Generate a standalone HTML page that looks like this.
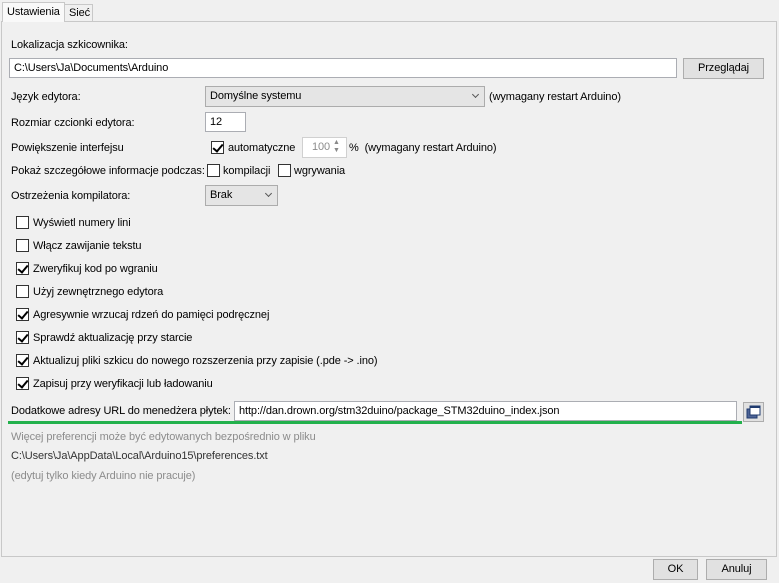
<!DOCTYPE html><html><head><style>
body{margin:0;width:779px;height:583px;background:#f0f0f0;font-family:"Liberation Sans",sans-serif;font-size:11px;letter-spacing:-0.1px;color:#000;position:relative;overflow:hidden}
.a{position:absolute;white-space:nowrap}
.t{position:absolute;white-space:nowrap;line-height:14px;margin-top:1px}
.in{position:absolute;background:#fff;border:1px solid #abadb3;box-sizing:border-box;padding:0 4px;line-height:18px}
.btn{position:absolute;background:#e1e1e1;border:1px solid #adadad;box-sizing:border-box;text-align:center;line-height:19px}
.sel{position:absolute;background:#e5e5e5;border:1px solid #acacac;box-sizing:border-box;padding:0 4px;line-height:19px}
.cb{position:absolute;width:13px;height:13px;border:1px solid #333;background:#fff;box-sizing:border-box}
.cb.c::after{content:"";position:absolute;left:3px;top:0px;width:4px;height:8px;border:solid #000;border-width:0 2px 2px 0;transform:rotate(40deg)}
.chev{position:absolute;right:6px;top:5px;width:4px;height:4px;border:solid #555;border-width:0 1px 1px 0;transform:rotate(45deg)}
.g{color:#8c8c8c}
</style></head><body>
<div class="a" style="left:1px;top:21px;width:774px;height:534px;border:1px solid #c8c8c8;background:#f0f0f0"></div>
<div class="a" style="left:2px;top:2px;width:63px;height:20px;border:1px solid #c8c8c8;border-bottom:none;background:#f9f9f9;line-height:19px;padding-left:4px;box-sizing:border-box">Ustawienia</div>
<div class="a" style="left:65px;top:4px;width:28px;height:17px;border:1px solid #c8c8c8;border-bottom:none;border-left:none;background:#f0f0f0;line-height:17px;padding-left:4px;box-sizing:border-box">Sieć</div>

<div class="t" style="left:11px;top:37px">Lokalizacja szkicownika:</div>
<div class="in" style="left:9px;top:58px;width:668px;height:20px">C:\Users\Ja\Documents\Arduino</div>
<div class="btn" style="left:683px;top:58px;width:81px;height:21px">Przeglądaj</div>

<div class="t" style="left:11px;top:89px">Język edytora:</div>
<div class="sel" style="left:205px;top:86px;width:280px;height:21px">Domyślne systemu<span class="chev"></span></div>
<div class="t" style="left:489px;top:89px">(wymagany restart Arduino)</div>

<div class="t" style="left:11px;top:115px">Rozmiar czcionki edytora:</div>
<div class="in" style="left:205px;top:112px;width:41px;height:20px">12</div>

<div class="t" style="left:11px;top:140px">Powiększenie interfejsu</div>
<div class="cb c" style="left:211px;top:141px"></div>
<div class="t" style="left:228px;top:140px">automatyczne</div>
<div class="in" style="left:302px;top:137px;width:45px;height:21px;color:#8c8c8c;text-align:right;padding-right:16px;border-color:#d0d0d0;line-height:19px">100</div>
<div class="a" style="left:333px;top:139px;font-size:7px;color:#888;line-height:8px">▲<br>▼</div>
<div class="t" style="left:349px;top:140px">%&nbsp; (wymagany restart Arduino)</div>

<div class="t" style="left:11px;top:163px">Pokaż szczegółowe informacje podczas:</div>
<div class="cb" style="left:207px;top:164px"></div>
<div class="t" style="left:223px;top:163px">kompilacji</div>
<div class="cb" style="left:278px;top:164px"></div>
<div class="t" style="left:294px;top:163px">wgrywania</div>

<div class="t" style="left:11px;top:188px">Ostrzeżenia kompilatora:</div>
<div class="sel" style="left:205px;top:185px;width:73px;height:21px">Brak<span class="chev"></span></div>

<div class="cb" style="left:16px;top:216px"></div><div class="t" style="left:33px;top:215px">Wyświetl numery lini</div>
<div class="cb" style="left:16px;top:239px"></div><div class="t" style="left:33px;top:238px">Włącz zawijanie tekstu</div>
<div class="cb c" style="left:16px;top:262px"></div><div class="t" style="left:33px;top:261px">Zweryfikuj kod po wgraniu</div>
<div class="cb" style="left:16px;top:285px"></div><div class="t" style="left:33px;top:284px">Użyj zewnętrznego edytora</div>
<div class="cb c" style="left:16px;top:308px"></div><div class="t" style="left:33px;top:307px">Agresywnie wrzucaj rdzeń do pamięci podręcznej</div>
<div class="cb c" style="left:16px;top:331px"></div><div class="t" style="left:33px;top:330px">Sprawdź aktualizację przy starcie</div>
<div class="cb c" style="left:16px;top:354px"></div><div class="t" style="left:33px;top:353px">Aktualizuj pliki szkicu do nowego rozszerzenia przy zapisie (.pde -&gt; .ino)</div>
<div class="cb c" style="left:16px;top:377px"></div><div class="t" style="left:33px;top:376px">Zapisuj przy weryfikacji lub ładowaniu</div>

<div class="t" style="left:11px;top:403px">Dodatkowe adresy URL do menedżera płytek:</div>
<div class="in" style="left:234px;top:401px;width:503px;height:20px">http://dan.drown.org/stm32duino/package_STM32duino_index.json</div>
<div class="a" style="left:8px;top:421px;width:734px;height:3px;background:#22b14c"></div>
<div class="btn" style="left:743px;top:402px;width:21px;height:20px"></div>
<svg class="a" style="left:746px;top:404px" width="16" height="16"><rect x="1" y="5" width="10" height="9" fill="#4e6496" stroke="#1f3a6e"/><rect x="4" y="2" width="10" height="9" fill="#fff" stroke="#1f3a6e"/><rect x="4" y="2" width="10" height="2" fill="#1f3a6e"/></svg>

<div class="t g" style="left:11px;top:429px">Więcej preferencji może być edytowanych bezpośrednio w pliku</div>
<div class="t" style="left:11px;top:448px;color:#333">C:\Users\Ja\AppData\Local\Arduino15\preferences.txt</div>
<div class="t g" style="left:11px;top:468px">(edytuj tylko kiedy Arduino nie pracuje)</div>

<div class="btn" style="left:653px;top:559px;width:45px;height:21px">OK</div>
<div class="btn" style="left:706px;top:559px;width:61px;height:21px">Anuluj</div>
</body></html>
